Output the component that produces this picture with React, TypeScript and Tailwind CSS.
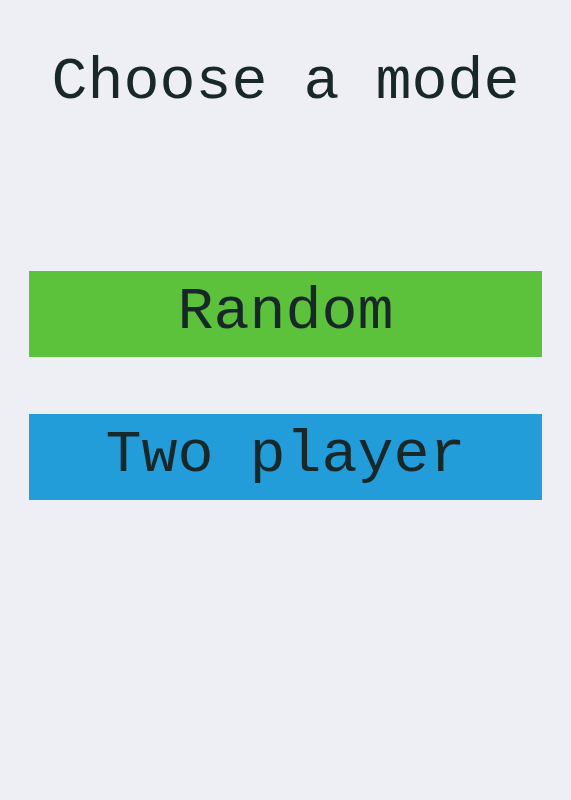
const modes = [
  { label: 'Random', color: 'bg-[#5cc13b]' },
  { label: 'Two player', color: 'bg-[#239dda]' },
];

export default function App() {
  return (
    <div className="min-h-[800px] bg-[#eeeff5] px-[29px] font-['Liberation_Mono','Courier_New',monospace] text-[#182828]">
      <h1 className="pt-[52px] text-center text-[60px] font-normal leading-none">
        Choose a mode
      </h1>

      <div className="mt-[159px] flex flex-col gap-[57px]">
        {modes.map((mode) => (
          <button
            key={mode.label}
            className={`flex h-[86px] w-full items-start justify-center pt-[11px] text-[60px] leading-none ${mode.color}`}
          >
            {mode.label}
          </button>
        ))}
      </div>
    </div>
  );
}
